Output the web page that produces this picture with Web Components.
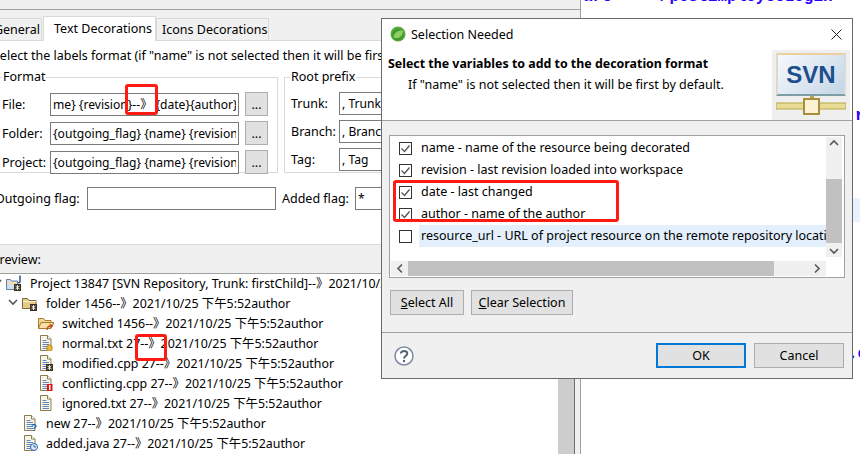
<!DOCTYPE html>
<html>
<head>
<meta charset="utf-8">
<style>
  html, body { margin: 0; padding: 0; }
  body {
    position: relative;
    width: 860px;
    height: 454px;
    overflow: hidden;
    display: flex;
    background: #fff;
    font: 12.5px "Noto Sans", "Noto Sans CJK SC", sans-serif;
    color: #000;
  }
</style>
</head>
<body>
<pref-window></pref-window>
<code-pane></code-pane>
<red-mark style="left:125px;top:84px;width:33px;height:31px"></red-mark>
<red-mark style="left:135px;top:334px;width:32px;height:27px"></red-mark>
<selection-dialog></selection-dialog>
<red-mark style="left:393px;top:180px;width:226px;height:42px"></red-mark>

<script>
const ICONS = {
  page: `<path d="M2.5 .5h7l3.5 3.5v11.5H2.5z" fill="#f7f4e8" stroke="#8d7c4e"/><path d="M9.5 .5v3.5H13" fill="#fff" stroke="#8d7c4e"/><path d="M4.5 5.5h4M4.5 7.5h6.5M4.5 9.5h6.5M4.5 11.5h6.5M4.5 13.5h6.5" stroke="#5f86bd"/>`,
  folder: `<path d="M.5 13.5V3.5h5l1.5 2h7v8z" fill="#e7c98a" stroke="#7f6a3c"/><path d="M1 6.5h13" stroke="#fbf0d2"/>`,
  open: `<path d="M.5 13.5V3.5h5l1.5 2h6v2" fill="#f2d595" stroke="#a97e2c"/><path d="M.5 13.5l2.500-6h13l-3 6z" fill="#f6dfa8" stroke="#a97e2c"/>`,
  star: `<rect x="8" y="9" width="7" height="7" fill="#3a3020"/><path d="M11.500 10v5M9.500 11l4 3M13.500 11l-4 3" stroke="#fff" stroke-width=".9"/>`,
  cyl: `<rect x="9" y="10" width="5" height="6" rx="1.500" fill="#e8b63a" stroke="#b88a1e"/>`,
  red: `<rect x="9" y="9" width="5.500" height="7" fill="#e01212"/><rect x="11" y="10" width="1.500" height="5" fill="#fff"/>`,
  quest: `<path d="M10 10.500c1-1.500 4-1 4 .5s-2 1.500-2 3M12 15v1" fill="none" stroke="#1c5fc0" stroke-width="1.300"/>`,
  clock: `<circle cx="12" cy="12" r="3.500" fill="#dbe9f8" stroke="#2e68a8"/><path d="M12 10v2h2" fill="none" stroke="#2e68a8"/>`,
  arrow: `<path d="M9 15c0-3 2-4 4-4" fill="none" stroke="#c8501a" stroke-width="1.400"/><path d="M11.500 8.500l4 2-3 3z" fill="#c8501a"/>`,
  svnhead: `<path d="M14 .5v6c0 1.500-2 1.500-2.500.5" fill="none" stroke="#2f5f98" stroke-width="1.600"/><path d="M.5 14.500V4.500h4l1 1.500h6v8.500z" fill="#cfdff0" stroke="#6a7f9c"/><path d="M1 8h10" stroke="#f4dca8" stroke-width="2"/>`
};

class TreeIcon extends HTMLElement {
  constructor() {
    super();
    this.shadowDOM = this.attachShadow({ mode: "open" });
  }
  connectedCallback() {
    const body = this.getAttribute("parts").split(" ").map((p) => ICONS[p]).join("");
    this.shadowDOM.innerHTML = `
      <style>
        :host { display: block; width: 16px; height: 16px; flex: none; }
        svg { display: block; }
      </style>
      <svg width="16" height="16" viewBox="0 0 16 16">${body}</svg>`;
  }
}
customElements.define("tree-icon", TreeIcon);

class TreeRow extends HTMLElement {
  constructor() {
    super();
    this.shadowDOM = this.attachShadow({ mode: "open" });
  }
  connectedCallback() {
    const indent = this.getAttribute("indent");
    const twisty = this.hasAttribute("open")
      ? `<svg class="twisty" style="left:${indent - 14}px" width="10" height="7" viewBox="0 0 10 7"><path d="M1 1l4 4 4-4" fill="none" stroke="#555" stroke-width="1.600"/></svg>`
      : "";
    this.shadowDOM.innerHTML = `
      <style>
        :host { display: flex; position: relative; align-items: center; height: 20px; gap: 8px; padding-left: ${indent}px; white-space: nowrap; font-size: 12.4px; }
        .twisty { position: absolute; top: 6px; }
      </style>
      ${twisty}
      <tree-icon parts="${this.getAttribute("icon")}"></tree-icon>
      <span><slot></slot></span>`;
  }
}
customElements.define("tree-row", TreeRow);

class UiButton extends HTMLElement {
  constructor() {
    super();
    this.shadowDOM = this.attachShadow({ mode: "open" });
  }
  connectedCallback() {
    this.shadowDOM.innerHTML = `
      <style>
        :host {
          display: flex;
          align-items: center;
          justify-content: center;
          box-sizing: border-box;
          height: 25px;
          background: #e1e1e1;
          border: 1px solid #adadad;
          white-space: nowrap;
        }
        :host([default]) { border: 2px solid #0078d7; }
      </style>
      <slot></slot>`;
  }
}
customElements.define("ui-button", UiButton);

class TextBox extends HTMLElement {
  constructor() {
    super();
    this.shadowDOM = this.attachShadow({ mode: "open" });
  }
  connectedCallback() {
    this.shadowDOM.innerHTML = `
      <style>
        :host {
          display: block;
          box-sizing: border-box;
          height: 23px;
          background: #fff;
          border: 1px solid #7a7a7a;
          padding: 0 2px;
          font-size: 12.1px;
          line-height: 21px;
        }
        div { overflow: hidden; white-space: nowrap; }
      </style>
      <div><slot></slot></div>`;
  }
}
customElements.define("text-box", TextBox);

class CheckRow extends HTMLElement {
  constructor() {
    super();
    this.shadowDOM = this.attachShadow({ mode: "open" });
  }
  connectedCallback() {
    const tick = this.hasAttribute("checked")
      ? `<path d="M2.500 6.500l3 3 5-6" fill="none" stroke="#555" stroke-width="1.300"/>`
      : "";
    this.shadowDOM.innerHTML = `
      <style>
        :host { display: flex; align-items: center; height: 22px; width: 435px; }
        svg { flex: none; margin: 0 7px 0 8px; }
        span { flex: 1; min-width: 0; height: 22px; line-height: 22px; padding-left: 2px; white-space: nowrap; overflow: hidden; }
        :host([hot]) span { background: #e3f0fc; }
      </style>
      <svg width="13" height="13" viewBox="0 0 13 13"><rect x=".5" y=".5" width="12" height="12" fill="#fff" stroke="#333"/>${tick}</svg>
      <span><slot></slot></span>`;
  }
}
customElements.define("check-row", CheckRow);

class RedMark extends HTMLElement {
  constructor() {
    super();
    this.shadowDOM = this.attachShadow({ mode: "open" });
  }
  connectedCallback() {
    this.shadowDOM.innerHTML = `
      <style>
        :host { display: block; position: absolute; box-sizing: border-box; border: 3px solid #ff1a12; border-radius: 3px; }
      </style>`;
  }
}
customElements.define("red-mark", RedMark);

class CodePane extends HTMLElement {
  constructor() {
    super();
    this.shadowDOM = this.attachShadow({ mode: "open" });
  }
  connectedCallback() {
    this.shadowDOM.innerHTML = `
      <style>
        :host { display: block; flex: 1; min-width: 0; overflow: hidden; background: #fff; }
        .lines { margin-top: -15px; font: bold 16px/24px "Liberation Mono", monospace; color: #2a00ff; }
        .line { height: 24px; white-space: pre; padding-left: 2px; }
        .far { padding-left: 274px; }
        .far.dot { padding-left: 267px; }
        .hot { background: #e8f2fe; }
      </style>
      <div class="lines">
        <div class="line">are     /postEmployeeLogin</div>
        <div class="line" style="height:95px"></div>
        <div class="line far">r</div>
        <div class="line" style="height:70px"></div>
        <div class="line hot"></div>
        <div class="line" style="height:120px"></div>
        <div class="line far dot">.c</div>
      </div>`;
  }
}
customElements.define("code-pane", CodePane);

class PrefWindow extends HTMLElement {
  constructor() {
    super();
    this.shadowDOM = this.attachShadow({ mode: "open" });
  }
  connectedCallback() {
    this.shadowDOM.innerHTML = `
      <style>
        :host { display: flex; flex-direction: column; flex: none; width: 581px; height: 454px; box-sizing: border-box; border-right: 1px solid #a0a0a0; background: #f0f0f0; overflow: hidden; }
        .band { height: 9px; flex: none; border-bottom: 1px solid #a0a0a0; }
        .tabs { display: flex; align-items: flex-end; height: 31px; flex: none; border-bottom: 1px solid #d9d9d9; box-sizing: border-box; }
        .tab { display: flex; align-items: center; box-sizing: border-box; height: 22px; background: #f0f0f0; border: 1px solid #d9d9d9; border-bottom: 0; white-space: nowrap; }
        .tab.general { width: 43px; margin-left: -1px; justify-content: flex-end; padding-right: 1px; overflow: hidden; }
        .tab.active { height: 25px; margin: 0 0 -1px 1px; width: 113px; padding: 0 0 1px 10px; background: #fff; }
        .tab.icons { width: 113px; padding-left: 5px; }
        .content { height: 203px; flex: none; background: #fff; overflow: hidden; }
        .hint { margin: 6px 0 0 -7px; width: 388px; height: 18px; line-height: 18px; white-space: nowrap; overflow: hidden; }
        .groups { display: flex; gap: 6px; margin: 4px 0 0 -2px; }
        fieldset { margin: 0; padding: 0; box-sizing: border-box; height: 104px; border: 1px solid #d9d9d9; min-width: 0; }
        fieldset.fmt { flex: none; width: 280px; }
        fieldset.root { flex: none; width: 290px; }
        legend { margin-left: 3px; padding: 0 1px; line-height: 16px; }
        .root legend { margin-left: 5px; }
        .grid { display: grid; align-items: center; row-gap: 5px; padding-top: 7px; }
        .fmt .grid { grid-template-columns: 48px 189px 29px; padding-left: 3px; }
        .root .grid { grid-template-columns: 48px 230px; padding-left: 6px; }
        .fmt ui-button { margin-left: 6px; height: 24px; width: 23px; }
        .flags { display: flex; align-items: center; margin-top: 14px; }
        .flags .out { flex: none; margin-left: -5px; width: 92px; white-space: nowrap; }
        .flags .add { flex: none; margin-left: 6px; width: 73px; white-space: nowrap; }
        .flags text-box { flex: none; }
        .preview { display: flex; align-items: center; box-sizing: border-box; height: 30px; flex: none; border-top: 1px solid #d9d9d9; border-bottom: 1px solid #a0a0a0; overflow: hidden; }
        .preview span { margin-left: -8px; }
        .lower { display: flex; flex: 1; min-height: 0; background: #fff; }
        .tree { flex: none; width: 558px; margin-top: -1px; overflow: hidden; }
        .bar { width: 16px; flex: none; background: #cdcdcd; border-right: 1px solid #6e6e6e; }
        .side { flex: 1; background: #f0f0f0; }
      </style>
      <div class="band"></div>
      <div class="tabs">
        <div class="tab general">General</div>
        <div class="tab active">Text Decorations</div>
        <div class="tab icons">Icons Decorations</div>
      </div>
      <div class="content">
        <div class="hint">Select the labels format (if "name" is not selected then it will be first</div>
        <div class="groups">
          <fieldset class="fmt">
            <legend>Format</legend>
            <div class="grid">
              <span>File:</span><text-box>me} {revision}--》 {date}{author}</text-box><ui-button>...</ui-button>
              <span>Folder:</span><text-box>{outgoing_flag} {name} {revision}</text-box><ui-button>...</ui-button>
              <span>Project:</span><text-box>{outgoing_flag} {name} {revision}</text-box><ui-button>...</ui-button>
            </div>
          </fieldset>
          <fieldset class="root">
            <legend>Root prefix</legend>
            <div class="grid">
              <span>Trunk:</span><text-box>, Trunk</text-box>
              <span>Branch:</span><text-box>, Branch</text-box>
              <span>Tag:</span><text-box>, Tag</text-box>
            </div>
          </fieldset>
        </div>
        <div class="flags">
          <span class="out">Outgoing flag:</span><text-box style="width:189px"></text-box>
          <span class="add">Added flag:</span><text-box style="width:120px">*</text-box>
        </div>
      </div>
      <div class="preview"><span>Preview:</span></div>
      <div class="lower">
        <div class="tree">
          <tree-row indent="6" icon="svnhead star" open>Project 13847 [SVN Repository, Trunk: firstChild]--》2021/10/25 下午5:52author</tree-row>
          <tree-row indent="22" icon="folder star" open>folder 1456--》2021/10/25 下午5:52author</tree-row>
          <tree-row indent="38" icon="open arrow">switched 1456--》2021/10/25 下午5:52author</tree-row>
          <tree-row indent="38" icon="page cyl">normal.txt 27--》2021/10/25 下午5:52author</tree-row>
          <tree-row indent="38" icon="page star">modified.cpp 27--》2021/10/25 下午5:52author</tree-row>
          <tree-row indent="38" icon="page red">conflicting.cpp 27--》2021/10/25 下午5:52author</tree-row>
          <tree-row indent="38" icon="page">ignored.txt 27--》2021/10/25 下午5:52author</tree-row>
          <tree-row indent="22" icon="page quest">new 27--》2021/10/25 下午5:52author</tree-row>
          <tree-row indent="22" icon="page clock">added.java 27--》2021/10/25 下午5:52author</tree-row>
        </div>
        <div class="bar"></div>
        <div class="side"></div>
      </div>`;
  }
}
customElements.define("pref-window", PrefWindow);

class SelectionDialog extends HTMLElement {
  constructor() {
    super();
    this.shadowDOM = this.attachShadow({ mode: "open" });
  }
  connectedCallback() {
    this.shadowDOM.innerHTML = `
      <style>
        :host { display: flex; flex-direction: column; position: absolute; left: 381px; top: 18px; width: 472px; height: 361px; box-sizing: border-box; border: 1px solid #6a6a6a; background: #f0f0f0; }
        .head { height: 102px; flex: none; box-sizing: border-box; background: #fff; border-bottom: 1px solid #a0a0a0; display: flex; flex-direction: column; }
        .title { display: flex; align-items: center; height: 30px; padding-left: 8px; gap: 5px; flex: none; }
        .title span { flex: 1; }
        .title .x { margin-right: 10px; }
        .banner { display: flex; flex: 1; min-height: 0; }
        .msg { flex: 1; padding: 5px 0 0 6px; }
        .msg b { display: block; line-height: 20px; font-weight: 700; font-size: 12.4px; }
        .msg p { margin: 1px 0 0 20px; line-height: 20px; }
        .logo { width: 78px; height: 70px; margin: 1px 2px 0 0; flex: none; background: #efefef; display: flex; flex-direction: column; align-items: center; }
        .screen { box-sizing: border-box; width: 70px; height: 43px; margin-top: 3px; border: 2px solid; border-color: #edd0a0 #d4dde0 #7d9ea4 #dcd8cc; background: linear-gradient(135deg, #f6f9fc, #c4d5e6); display: flex; align-items: center; justify-content: center; font: 700 24px "Liberation Sans", sans-serif; color: #1d4f8c; }
        .logo svg { display: block; }
        .body { flex: 1; min-height: 0; }
        .table { box-sizing: border-box; width: 456px; height: 143px; margin: 14px 0 0 7px; border: 1px solid #a0a0a0; background: #fff; padding: 1px 0 0 1px; }
        .table-main { display: flex; height: 124px; }
        .rows { width: 435px; overflow: hidden; flex: none; }
        .vbar { width: 16px; flex: none; height: 120px; background: #f0f0f0; display: flex; flex-direction: column; align-items: center; }
        .vbar svg { flex: none; }
        .vthumb { width: 16px; height: 64px; background: #c1c1c1; margin-top: 31px; }
        .hbar { display: flex; align-items: center; height: 15px; background: #f0f0f0; width: 435px; }
        .hthumb { width: 366px; height: 15px; background: #c1c1c1; margin-left: 3px; }
        .actions { display: flex; gap: 7px; margin: 12px 0 0 8px; }
        .actions ui-button:first-child { width: 74px; }
        .actions ui-button:last-child { width: 102px; }
        .foot { height: 46px; box-sizing: border-box; flex: none; border-top: 1px solid #a0a0a0; display: flex; align-items: center; padding: 0 8px 0 12px; gap: 8px; }
        .foot svg { margin-right: auto; }
        .foot ui-button { width: 90px; }
      </style>
      <div class="head">
        <div class="title">
          <svg width="16" height="16" viewBox="0 0 16 16"><circle cx="8" cy="8" r="7.500" fill="#5bab3a"/><circle cx="8" cy="8.500" r="6" fill="#3f9a32"/><path d="M3.500 11C4 6 9 4 13 4.500 13 9 10 13 5 12z" fill="#8fce62"/></svg>
          <span>Selection Needed</span>
          <svg class="x" width="11" height="11" viewBox="0 0 11 11"><path d="M.5 .5l10 10M10.500 .5l-10 10" stroke="#222" stroke-width="1"/></svg>
        </div>
        <div class="banner">
          <div class="msg">
            <b>Select the variables to add to the decoration format</b>
            <p>If "name" is not selected then it will be first by default.</p>
          </div>
          <div class="logo">
            <div class="screen">SVN</div>
            <svg width="70" height="20" viewBox="0 0 70 20"><rect x="34" y="0" width="4" height="6" fill="#b5a45c"/><rect x="0" y="7" width="70" height="6" fill="#e8dc94" stroke="#b8a848" stroke-width="1"/><rect x="28" y="3" width="15" height="15" fill="#fbf2d4" stroke="#a88e3c" stroke-width="2"/></svg>
          </div>
        </div>
      </div>
      <div class="body">
        <div class="table">
          <div class="table-main">
            <div class="rows">
              <check-row checked>name - name of the resource being decorated</check-row>
              <check-row checked>revision - last revision loaded into workspace</check-row>
              <check-row checked>date - last changed</check-row>
              <check-row checked>author - name of the author</check-row>
              <check-row hot>resource_url - URL of project resource on the remote repository location</check-row>
            </div>
            <div class="vbar">
              <svg width="16" height="11" viewBox="0 0 16 11"><path d="M4 8l4-4 4 4" fill="none" stroke="#555" stroke-width="1.600"/></svg>
              <div class="vthumb"></div>
              <svg style="margin-top:auto" width="16" height="11" viewBox="0 0 16 11"><path d="M4 3l4 4 4-4" fill="none" stroke="#555" stroke-width="1.600"/></svg>
            </div>
          </div>
          <div class="hbar">
            <svg width="11" height="15" viewBox="0 0 11 15" style="margin-left:3px;flex:none"><path d="M8 3.500l-4 4 4 4" fill="none" stroke="#555" stroke-width="1.600"/></svg>
            <div class="hthumb"></div>
            <svg width="11" height="15" viewBox="0 0 11 15" style="margin-left:auto;margin-right:3px;flex:none"><path d="M3 3.500l4 4-4 4" fill="none" stroke="#555" stroke-width="1.600"/></svg>
          </div>
        </div>
        <div class="actions">
          <ui-button><span><u>S</u>elect All</span></ui-button>
          <ui-button><span><u>C</u>lear Selection</span></ui-button>
        </div>
      </div>
      <div class="foot">
        <svg width="20" height="20" viewBox="0 0 20 20"><circle cx="10" cy="10" r="9" fill="#fff" stroke="#7d8ba3" stroke-width="1.500"/><path d="M6.800 7.500c.3-3.500 6.500-3.500 6.500 0 0 2.500-3.300 2.500-3.300 5" fill="none" stroke="#55627c" stroke-width="2"/><circle cx="10" cy="15" r="1.200" fill="#55627c"/></svg>
        <ui-button default>OK</ui-button>
        <ui-button>Cancel</ui-button>
      </div>`;
  }
}
customElements.define("selection-dialog", SelectionDialog);
</script>
</body>
</html>
